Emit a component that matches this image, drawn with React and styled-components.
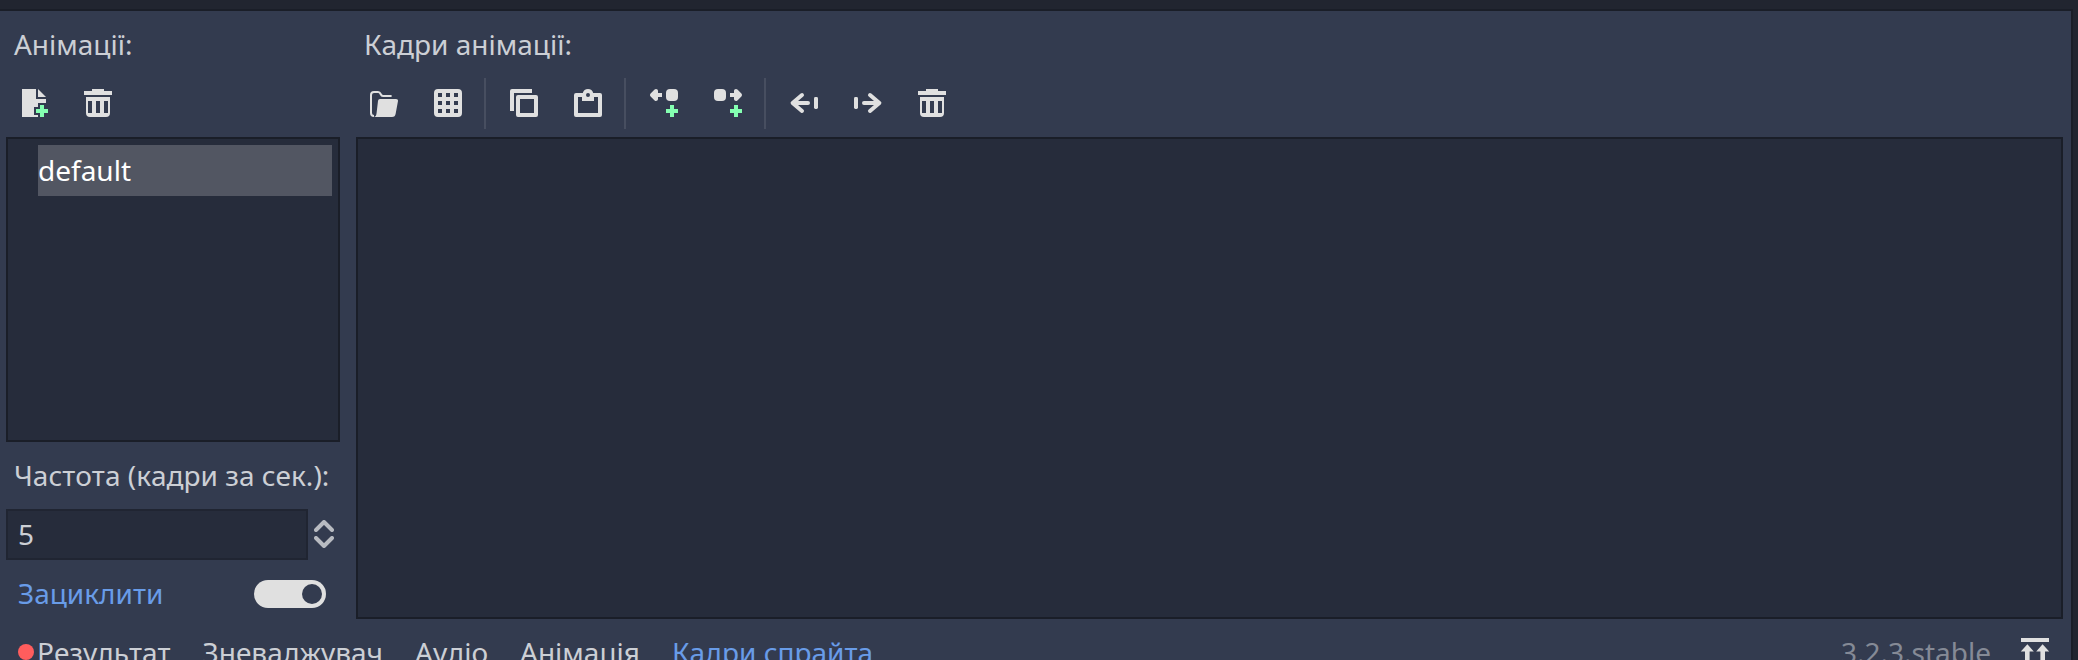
import React, { useState } from 'react';
import styled, { createGlobalStyle } from 'styled-components';

const color = {
  frame: '#212530',
  edge: '#1a1e28',
  panel: '#333b4f',
  well: '#262c3b',
  fieldEdge: '#202532',
  rule: '#474e60',
  selected: '#525662',
  text: '#cccfd5',
  dim: '#858a96',
  accent: '#699ce8',
  icon: '#e0e0e0',
  add: '#84ffb1',
  alert: '#ff5d5d',
};

const GlobalStyle = createGlobalStyle`
  *, *::before, *::after { box-sizing: border-box; }
  body {
    margin: 0;
    background: ${color.frame};
    color: ${color.text};
    font: 28px/38px "Noto Sans", sans-serif;
    font-kerning: none;
  }
  button, input { font: inherit; font-kerning: none; color: inherit; }
`;

const Window = styled.div`
  display: flex;
  flex-direction: column;
  height: 100vh;
  padding: 9px 5px 0 0;
  overflow: hidden;
`;

const Dock = styled.main`
  flex: 1;
  min-height: 0;
  display: flex;
  flex-direction: column;
  gap: 8px;
  padding: 8px 8px 0 6px;
  background: ${color.panel};
  border: solid ${color.edge};
  border-width: 2px 2px 0 0;
`;

const Editor = styled.div`
  flex: 1;
  min-height: 0;
  display: flex;
  gap: 16px;
`;

const Column = styled.section`
  display: flex;
  flex-direction: column;
  gap: 8px;
  min-width: 0;
  flex: ${(p) => (p.$side ? '0 0 334px' : '1')};
`;

const Title = styled.h2`
  height: 51px;
  margin: 0;
  padding: 6px 8px;
  font-size: 28px;
  font-weight: 400;
  white-space: nowrap;
`;

const FieldLabel = styled(Title).attrs({ as: 'label' })``;

const Toolbar = styled.div`
  display: flex;
  gap: 8px;
  height: 51px;
`;

const Divider = styled.span`
  width: 2px;
  margin-right: 2px;
  background: ${color.rule};
`;

const ToolButton = styled.button`
  display: flex;
  width: 56px;
  height: 51px;
  padding: 9px 12px 10px;
  border: 0;
  background: none;
  cursor: pointer;
`;

const Glyph = styled.svg`
  flex: none;
  width: 32px;
  height: 32px;
  fill: ${color.icon};
`;

const Well = styled.div`
  flex: 1;
  min-height: 0;
  background: ${color.well};
  border: 2px solid ${color.edge};
`;

const AnimationList = styled(Well).attrs({ as: 'ul' })`
  margin: 0;
  padding: 6px 6px 6px 30px;
  list-style: none;
`;

const AnimationItem = styled.button`
  display: block;
  width: 100%;
  height: 51px;
  padding: 6px 0 7px;
  border: 0;
  text-align: left;
  color: #fff;
  background: ${(p) => (p.$selected ? color.selected : 'none')};
`;

const SpinBox = styled.div`
  display: flex;
  height: 51px;
`;

const SpinInput = styled.input`
  flex: 1;
  min-width: 0;
  padding: 4px 10px 5px;
  background: ${color.well};
  border: 2px solid ${color.fieldEdge};
  border-radius: 0;
  appearance: textfield;
  &::-webkit-inner-spin-button { appearance: none; margin: 0; }
`;

const Stepper = styled.div`
  display: flex;
  flex-direction: column;
  width: 32px;
  padding: 9px 6px;
`;

const StepButton = styled.button`
  display: flex;
  height: 16px;
  padding: 2px 0 0;
  border: 0;
  background: none;
`;

const Chevron = styled.svg`
  width: 20px;
  height: 12px;
  fill: none;
  stroke: #b8bbc1;
  stroke-width: 4;
  stroke-linecap: round;
  stroke-linejoin: round;
`;

const SwitchRow = styled.label`
  display: flex;
  justify-content: space-between;
  align-items: flex-start;
  height: 51px;
  padding: 6px 14px 0 12px;
  color: ${color.accent};
`;

const Switch = styled.input`
  appearance: none;
  display: flex;
  justify-content: ${(p) => (p.checked ? 'flex-end' : 'flex-start')};
  width: 72px;
  height: 28px;
  margin: 6px 0 0;
  padding: 4px;
  border-radius: 14px;
  background: ${color.icon};
  &::before {
    content: '';
    width: 20px;
    height: 20px;
    border-radius: 50%;
    background: ${color.panel};
  }
`;

const BottomBar = styled.footer`
  flex: none;
  display: flex;
  justify-content: space-between;
  height: 51px;
  margin-bottom: -18px;
`;

const Tabs = styled.nav`
  display: flex;
  gap: 8px;
`;

const Tab = styled.button`
  display: flex;
  align-items: center;
  gap: 3px;
  padding: 6px 12px 7px;
  border: 0;
  background: none;
  white-space: nowrap;
  color: ${(p) => (p.$active ? color.accent : color.text)};
`;

const Dot = styled.span`
  width: 16px;
  height: 16px;
  border-radius: 50%;
  background: ${color.alert};
`;

const Status = styled.div`
  display: flex;
  gap: 16px;
  color: ${color.dim};
`;

const Version = styled.span`
  padding: 6px 0;
`;

const plus = <path fill={color.add} d="M11 9v2H9v2h2v2h2v-2h2v-2h-2V9z" />;
const line = {
  fill: 'none',
  stroke: color.icon,
  strokeWidth: 2,
  strokeLinecap: 'round',
  strokeLinejoin: 'round',
};

const icons = {
  create: (
    <>
      <path d="M2 1v14h8v-1H8v-4h2V8h4V6H9V1zM10 1v4h4z" />
      {plus}
    </>
  ),
  trash: (
    <path
      fillRule="evenodd"
      d="M5 1v1H1v2h14V2h-4V1zM2 5v8a2 2 0 0 0 2 2h8a2 2 0 0 0 2-2V5zm1 2h2v6H3zm4 0h2v6H7zm4 0h2v6h-2z"
    />
  ),
  folder: (
    <>
      <path
        fill="none"
        stroke={color.icon}
        d="M3 14.5c-1 0-1.500-.5-1.500-1.500V4c0-1 .5-1.500 1.500-1.500h2c.8 0 1 .3 1.300 1 .3.700.6 1 1.200 1h4.300"
      />
      <path d="M6 6c-.6 0-.9.400-1 1l-.7 6c-.15 1.200-.5 2-1.500 2h9.200c1.100 0 1.700-.7 1.850-1.800L15 7c.08-.6-.3-1-1-1z" />
    </>
  ),
  sheet: (
    <path
      fillRule="evenodd"
      d="M3 1a2 2 0 0 0-2 2v10a2 2 0 0 0 2 2h10a2 2 0 0 0 2-2V3a2 2 0 0 0-2-2zm0 2h2v2H3zm4 0h2v2H7zm4 0h2v2h-2zM3 7h2v2H3zm4 0h2v2H7zm4 0h2v2h-2zm-8 4h2v2H3zm4 0h2v2H7zm4 0h2v2h-2z"
    />
  ),
  copy: (
    <path
      fillRule="evenodd"
      d="M2 1a1 1 0 0 0-1 1v10h2V3h9V1zM5 4a1 1 0 0 0-1 1v9a1 1 0 0 0 1 1h9a1 1 0 0 0 1-1V5a1 1 0 0 0-1-1zm1 2h7v7H6z"
    />
  ),
  paste: (
    <path
      fillRule="evenodd"
      d="M8 1a2.700 2.700 0 0 0-2.600 2H2a1 1 0 0 0-1 1v10a1 1 0 0 0 1 1h12a1 1 0 0 0 1-1V4a1 1 0 0 0-1-1h-3.400A2.700 2.700 0 0 0 8 1zm0 2a1 1 0 0 1 0 2 1 1 0 0 1 0-2zM3 5h2v2h6V5h2v8H3z"
    />
  ),
  insertBefore: (
    <>
      <rect x="9" y="1" width="6" height="6" rx="2" />
      <path d="M4 1c-.3 0-.5.100-.7.300l-2 2c-.4.400-.4 1 0 1.400l2 2c.6.600 1.700.2 1.700-.7V5h2V3H5V2c0-.6-.4-1-1-1z" />
      {plus}
    </>
  ),
  insertAfter: (
    <>
      <rect x="1" y="1" width="6" height="6" rx="2" />
      <path d="M12 1c.3 0 .5.100.7.300l2 2c.4.400.4 1 0 1.400l-2 2c-.6.600-1.700.2-1.700-.7V5H9V3h2V2c0-.6.400-1 1-1z" />
      {plus}
    </>
  ),
  moveLeft: (
    <>
      <path {...line} d="M7 4 2.300 8 7 12M3 8h7" />
      <rect x="13" y="5" width="2" height="6" rx=".7" />
    </>
  ),
  moveRight: (
    <>
      <path {...line} d="m9 4 4.700 4L9 12M13 8H6" />
      <rect x="1" y="5" width="2" height="6" rx=".7" />
    </>
  ),
  expand: (
    <path d="M1 1h14v2H1zM4.200 4.100.9 7.800H3V15h2.300V7.800h2.100zM11.800 4.100 8.600 7.800h2.100V15H13V7.800h2.100z" />
  ),
};

function Tool({ icon, label }) {
  return (
    <ToolButton type="button" aria-label={label}>
      <Glyph viewBox="0 0 16 16" aria-hidden="true">{icons[icon]}</Glyph>
    </ToolButton>
  );
}

const tabs = ['Результат', 'Зневаджувач', 'Аудіо', 'Анімація', 'Кадри спрайта'];

export default function App() {
  const [fps, setFps] = useState(5);
  const [loop, setLoop] = useState(true);
  const [active, setActive] = useState('Кадри спрайта');

  return (
    <>
      <GlobalStyle />
      <Window>
        <Dock>
          <Editor>
            <Column $side>
              <Title>Анімації:</Title>
              <Toolbar>
                <Tool icon="create" label="Нова анімація" />
                <Tool icon="trash" label="Вилучити анімацію" />
              </Toolbar>
              <AnimationList>
                <li>
                  <AnimationItem type="button" aria-pressed="true" $selected>default</AnimationItem>
                </li>
              </AnimationList>
              <FieldLabel htmlFor="fps">Частота (кадри за сек.):</FieldLabel>
              <SpinBox>
                <SpinInput
                  id="fps"
                  type="number"
                  min="0"
                  value={fps}
                  onChange={(e) => setFps(Number(e.target.value))}
                />
                <Stepper>
                  <StepButton type="button" aria-label="Більше" onClick={() => setFps(fps + 1)}>
                    <Chevron viewBox="0 0 20 12"><path d="m2 10 8-8 8 8" /></Chevron>
                  </StepButton>
                  <StepButton type="button" aria-label="Менше" onClick={() => setFps(Math.max(0, fps - 1))}>
                    <Chevron viewBox="0 0 20 12"><path d="m2 2 8 8 8-8" /></Chevron>
                  </StepButton>
                </Stepper>
              </SpinBox>
              <SwitchRow>
                Зациклити
                <Switch type="checkbox" checked={loop} onChange={(e) => setLoop(e.target.checked)} />
              </SwitchRow>
            </Column>
            <Column>
              <Title>Кадри анімації:</Title>
              <Toolbar>
                <Tool icon="folder" label="Завантажити" />
                <Tool icon="sheet" label="Додати кадри з аркуша" />
                <Divider />
                <Tool icon="copy" label="Копіювати" />
                <Tool icon="paste" label="Вставити" />
                <Divider />
                <Tool icon="insertBefore" label="Вставити перед" />
                <Tool icon="insertAfter" label="Вставити після" />
                <Divider />
                <Tool icon="moveLeft" label="Перемістити ліворуч" />
                <Tool icon="moveRight" label="Перемістити праворуч" />
                <Tool icon="trash" label="Вилучити" />
              </Toolbar>
              <Well />
            </Column>
          </Editor>
          <BottomBar>
            <Tabs>
              {tabs.map((name, i) => (
                <Tab key={name} type="button" $active={name === active} onClick={() => setActive(name)}>
                  {i === 0 && <Dot />}
                  {name}
                </Tab>
              ))}
            </Tabs>
            <Status>
              <Version>3.2.3.stable</Version>
              <Tool icon="expand" label="Розгорнути панель" />
            </Status>
          </BottomBar>
        </Dock>
      </Window>
    </>
  );
}
